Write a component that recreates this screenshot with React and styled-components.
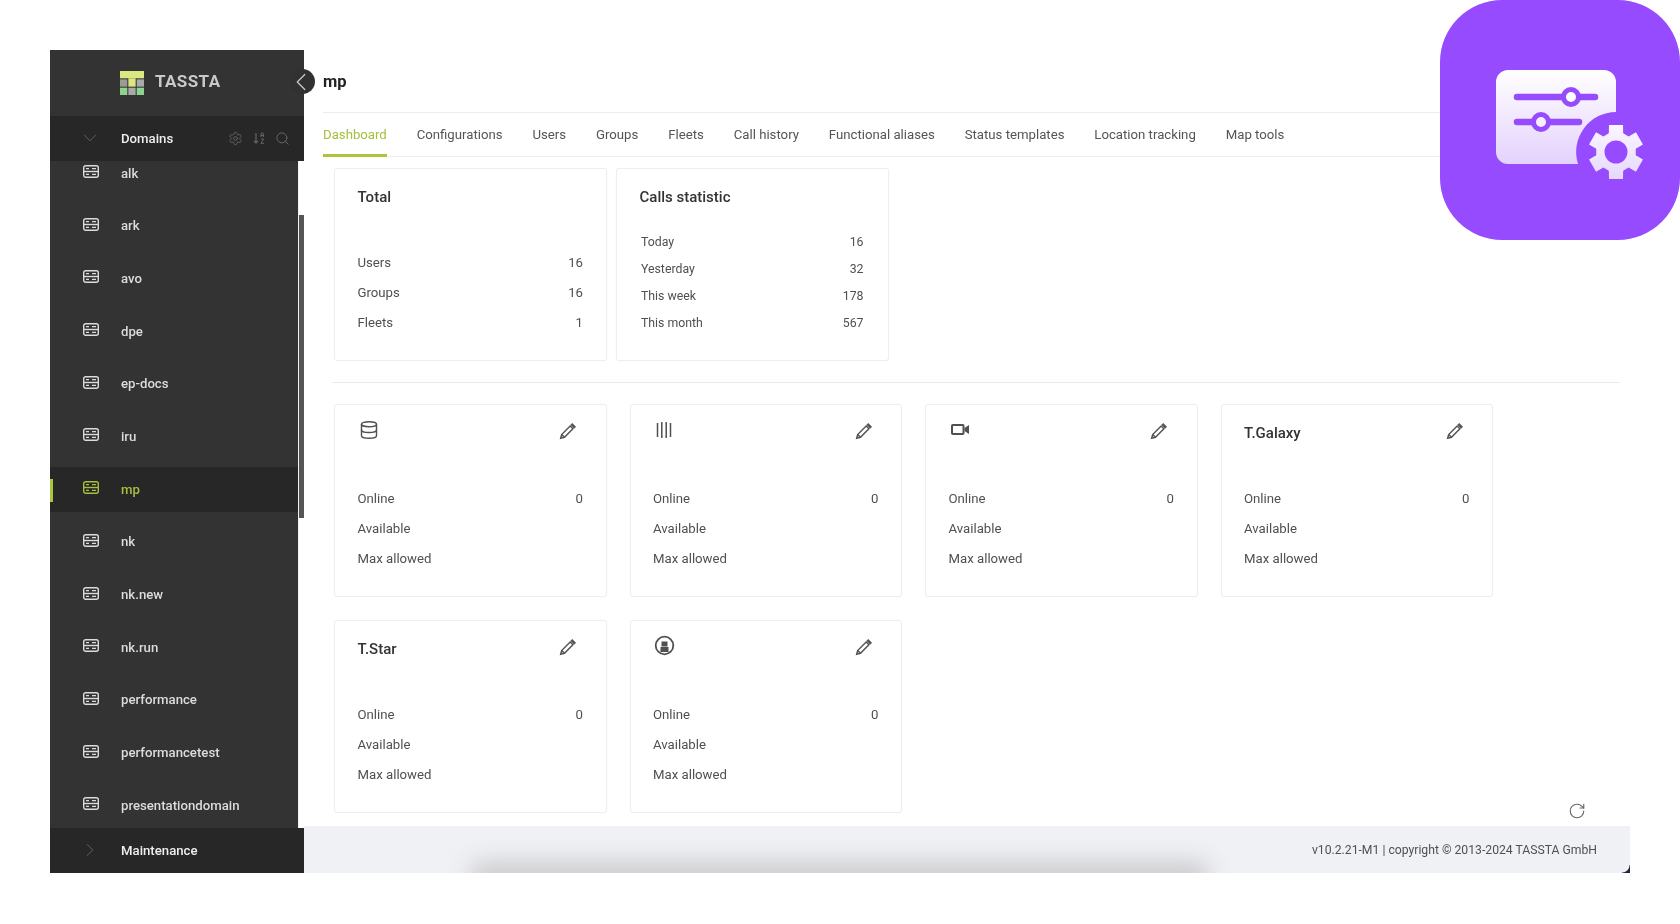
import React from 'react'
import styled, { createGlobalStyle } from 'styled-components'
import { ChevronDown, ChevronLeft, ChevronRight, Database, RotateCw, Search, Settings } from 'lucide-react'

const GlobalStyle = createGlobalStyle`
  html, body {
    margin: 0;
    background: #fff;
  }
  body {
    font-family: Roboto, "Liberation Sans", sans-serif;
    overflow: hidden;
  }
`

const Page = styled.div`
  position: relative;
  width: 1680px;
  height: 924px;
  padding: 50px 0 0 50px;
  box-sizing: border-box;
  overflow: hidden;
`
const Frame = styled.div`
  display: flex;
  width: 1580px;
  height: 823px;
  filter: blur(0.4px);
`
const Sidebar = styled.aside`
  position: relative;
  display: flex;
  flex-direction: column;
  flex: 0 0 254px;
  background: #343333;
  border-bottom-left-radius: 6px;
  overflow: visible;
`
const Brand = styled.div`
  display: flex;
  align-items: center;
  gap: 11px;
  height: 66px;
  padding-left: 70px;
  box-sizing: border-box;
`
const BrandName = styled.span`
  margin-top: -5px;
  font-size: 17px;
  font-weight: 700;
  letter-spacing: 0.4px;
  color: #c9c9c9;
`
const CollapseButton = styled.div`
  position: absolute;
  top: 19px;
  left: 240px;
  width: 25px;
  height: 25px;
  border-radius: 50%;
  background: #323131;
  color: #c8c8c8;
  display: flex;
  align-items: center;
  justify-content: center;
  > svg {
    flex: none;
    margin-left: -3px;
  }
`
const Section = styled.div`
  display: flex;
  align-items: center;
  flex: 0 0 45px;
  padding: 0 14px 1px 29px;
  box-sizing: border-box;
  background: #282727;
  color: #eee;
  font-size: 13.2px;
  font-weight: 500;
  > svg:first-child {
    color: #666;
    margin-right: 20px;
  }
`
const SectionName = styled.span`
  flex: 1;
`
const SectionTools = styled.div`
  display: flex;
  align-items: center;
  gap: 9px;
  color: #666;
`
const ListArea = styled.div`
  display: flex;
  flex: 1;
  min-height: 0;
`
const List = styled.div`
  flex: 1;
  overflow: hidden;
`
const ListInner = styled.div`
  margin-top: -10.5px;
`
const Row = styled.div`
  position: relative;
  display: flex;
  align-items: center;
  height: 45px;
  margin-bottom: 7.7px;
  padding-left: 33px;
  font-size: 13.2px;
  font-weight: 500;
  background: ${p => (p.$active ? '#282727' : 'transparent')};
  color: ${p => (p.$active ? '#a5c03c' : '#dcdcdc')};
  > svg {
    margin: -3px 22px 0 0;
  }
`
const ActiveMark = styled.span`
  position: absolute;
  left: 0;
  top: 12px;
  width: 3px;
  height: 23px;
  background: #a9c63c;
`
const ScrollTrack = styled.div`
  flex: 0 0 6px;
  background: #fff;
  border-left: 1px solid #f0f0f0;
  box-sizing: border-box;
`
const ScrollThumb = styled.div`
  margin-top: 54px;
  height: 303px;
  background: #555;
`
const Main = styled.main`
  flex: 1;
  display: flex;
  flex-direction: column;
  min-width: 0;
`
const Header = styled.header`
  margin: 0 10px 0 19px;
`
const Title = styled.h1`
  display: flex;
  align-items: center;
  height: 62px;
  margin: 0;
  font-size: 16.5px;
  font-weight: 700;
  color: #222;
  border-bottom: 1px solid #ececec;
`
const Tabs = styled.nav`
  display: flex;
  gap: 29.9px;
  height: 43px;
  border-bottom: 1px solid #efefef;
`
const Tab = styled.div`
  display: flex;
  align-items: center;
  height: 44px;
  box-sizing: border-box;
  padding-top: 1px;
  font-size: 13.2px;
  color: ${p => (p.$active ? '#a5c03c' : '#555')};
  border-bottom: 3px solid ${p => (p.$active ? '#a9c63c' : 'transparent')};
`
const Content = styled.div`
  flex: 1;
  padding: 11px 10px 0 30px;
  min-height: 0;
`
const CardRow = styled.div`
  display: flex;
  gap: ${p => p.$gap}px;
  margin-bottom: ${p => p.$last ? 0 : 23}px;
`
const Divider = styled.hr`
  border: 0;
  border-top: 1px solid #e9e9e9;
  margin: 21px 0 21px -2px;
`
const Card = styled.section`
  width: 272.5px;
  height: 193px;
  box-sizing: border-box;
  padding: 0 22.5px;
  background: #fff;
  border: 1px solid #eeeeee;
  border-radius: 3px;
  box-shadow: 0 0 2px rgba(0, 0, 0, 0.04);
`
const CardHead = styled.div`
  display: flex;
  justify-content: space-between;
  align-items: flex-start;
  height: ${p => (p.$compact ? 59 : 78)}px;
  padding-top: 18px;
  box-sizing: border-box;
`
const CardTitle = styled.h2`
  margin: 0;
  font-size: 15px;
  font-weight: 500;
  line-height: 20px;
  color: #333;
`
const IconBox = styled.div`
  display: flex;
  justify-content: center;
  align-items: center;
  width: 22px;
  height: 20px;
  margin-top: -3.5px;
  color: #505050;
`
const EditIcon = styled.svg`
  width: 17px;
  height: 17px;
  margin-right: 7px;
  color: #555;
`
const Stat = styled.div`
  display: flex;
  justify-content: space-between;
  align-items: center;
  height: ${p => (p.$compact ? 27.2 : 30)}px;
  margin: ${p => (p.$compact ? '0 1.5px 0 1.5px' : '0')};
  font-size: ${p => (p.$compact ? 12.3 : 13.2)}px;
  color: #505050;
`
const Refresh = styled.div`
  align-self: flex-end;
  margin: 0 0 -7px auto;
  padding-right: 34px;
  color: #666;
  display: flex;
`
const Footer = styled.footer`
  position: relative;
  flex: 0 0 47px;
  display: flex;
  align-items: center;
  justify-content: flex-end;
  padding-right: 33px;
  background: #f0f1f5;
  font-size: 12.2px;
  color: #505050;
  overflow: hidden;
`
const FooterShade = styled.div`
  position: absolute;
  left: 168px;
  bottom: -20px;
  width: 735px;
  height: 30px;
  background: #c8c8ca;
  filter: blur(12px);
`
const FooterCorner = styled.div`
  position: absolute;
  right: 0;
  bottom: 0;
  width: 8px;
  height: 8px;
  background: radial-gradient(circle at 0 0, transparent 7px, #1e2a3c 8px);
`
const Badge = styled.div`
  position: absolute;
  top: 0;
  right: 0;
  width: 240px;
  height: 240px;
  border-radius: 62px;
  background: #964bff;
`

const DOMAINS = ['alk', 'ark', 'avo', 'dpe', 'ep-docs', 'iru', 'mp', 'nk', 'nk.new', 'nk.run', 'performance', 'performancetest', 'presentationdomain']
const TABS = ['Dashboard', 'Configurations', 'Users', 'Groups', 'Fleets', 'Call history', 'Functional aliases', 'Status templates', 'Location tracking', 'Map tools']

function ServerIcon() {
  return (
    <svg width="16" height="13" viewBox="0 0 16 13" fill="none" stroke="currentColor" strokeWidth="1.4">
      <rect x="0.7" y="0.7" width="14.6" height="11.6" rx="2" />
      <path d="M1 6.5h14" />
      <path d="M3 3.6h3M3 9.4h3M9 3.6h4M9 9.4h4" strokeWidth="1.2" />
    </svg>
  )
}

function Logo() {
  return (
    <svg width="24" height="24" viewBox="0 0 23 23">
      <rect x="0" y="0" width="23" height="7" fill="#dbe77f" />
      <rect x="8" y="7" width="7" height="8" fill="#dbe77f" />
      <rect x="0" y="8" width="7" height="7" fill="#9b9b93" />
      <rect x="16" y="8" width="7" height="7" fill="#a9a9a9" />
      <rect x="0" y="16" width="7" height="7" fill="#8ed48f" />
      <rect x="8" y="16" width="7" height="7" fill="#a9a9a9" />
      <rect x="16" y="16" width="7" height="7" fill="#8ed48f" />
    </svg>
  )
}

function SortIcon() {
  return (
    <svg width="14" height="14" viewBox="0 0 14 14" fill="none" stroke="currentColor" strokeWidth="1.2">
      <path d="M4 2v10M2 10l2 2 2-2" />
      <path d="M9 6V3l1.2-1.5L11.4 3v3M9 4.5h2.4M9 8h2.6L9 12.4h2.8" strokeWidth="1" />
    </svg>
  )
}

function PencilIcon() {
  return (
    <EditIcon viewBox="0 0 16 16" fill="none" stroke="currentColor" strokeWidth="1.4">
      <path d="M1.6 14.4l.9-3.5 8-8 2.6 2.6-8 8z" />
      <path d="M2.5 10.9l2.6 2.6" />
      <path d="M11.7 1.6l.7-.6 2.6 2.6-.7.7z" fill="currentColor" />
    </EditIcon>
  )
}

function BarsIcon() {
  return (
    <svg width="16" height="18" viewBox="0 0 16 18" stroke="currentColor" strokeWidth="1.5">
      <path d="M1.5 2v14M5.8 1v16M10.2 1v16M14.5 2v14" />
    </svg>
  )
}

function VideoIcon() {
  return (
    <svg width="18" height="11" viewBox="0 0 18 11">
      <rect x="1" y="1" width="11.5" height="9" rx="0.8" fill="none" stroke="currentColor" strokeWidth="2" />
      <path d="M13.5 4l4.5-3v9l-4.5-3z" fill="currentColor" />
    </svg>
  )
}

function StarIcon() {
  return (
    <svg width="21" height="21" viewBox="0 0 21 21" fill="none" stroke="currentColor">
      <circle cx="10.5" cy="10.5" r="8.8" strokeWidth="1.8" />
      <rect x="7.5" y="6.5" width="6" height="5" fill="currentColor" stroke="none" />
      <rect x="6.5" y="12" width="8" height="5" fill="currentColor" stroke="none" />
    </svg>
  )
}

function gearPath(cx, cy, outer, base, hole) {
  const pts = []
  for (let i = 0; i < 6; i++) {
    const a = -90 + i * 60
    ;[[base, -21], [outer, -14.5], [outer, 14.5], [base, 21]].forEach(([r, d]) => {
      const t = ((a + d) * Math.PI) / 180
      pts.push(`${(cx + r * Math.cos(t)).toFixed(2)} ${(cy + r * Math.sin(t)).toFixed(2)}`)
    })
  }
  return `M${pts.join('L')}Z M${cx - hole} ${cy}a${hole} ${hole} 0 1 0 ${hole * 2} 0a${hole} ${hole} 0 1 0 ${-hole * 2} 0Z`
}

function BadgeArt() {
  return (
    <svg width="240" height="240" viewBox="0 0 240 240">
      <defs>
        <linearGradient id="panelFill" x1="0" y1="70" x2="0" y2="164" gradientUnits="userSpaceOnUse">
          <stop offset="0" stopColor="#ffffff" />
          <stop offset="1" stopColor="#e4d2fc" />
        </linearGradient>
        <linearGradient id="gearFill" x1="0" y1="124" x2="0" y2="180" gradientUnits="userSpaceOnUse">
          <stop offset="0" stopColor="#fbf8ff" />
          <stop offset="1" stopColor="#e6d6fc" />
        </linearGradient>
      </defs>
      <path d="M68 70h96a12 12 0 0 1 12 12v30a40 40 0 0 0-38 52H68a12 12 0 0 1-12-12V82a12 12 0 0 1 12-12z" fill="url(#panelFill)" />
      <g stroke="#964bff" strokeWidth="6.5" strokeLinecap="round" fill="none">
        <path d="M77 97h78M77 122h62" />
      </g>
      <circle cx="131" cy="97" r="7.5" fill="#fff" stroke="#964bff" strokeWidth="5" />
      <circle cx="101" cy="122" r="7.5" fill="#f6effe" stroke="#964bff" strokeWidth="5" />
      <path d={gearPath(176, 152, 28, 20, 11.5)} fill="url(#gearFill)" fillRule="evenodd" />
    </svg>
  )
}

function StatCard({ head, name, rows, compact, editable }) {
  return (
    <Card>
      <CardHead $compact={compact}>
        {name ? <CardTitle>{name}</CardTitle> : <IconBox>{head}</IconBox>}
        {editable && <PencilIcon />}
      </CardHead>
      {rows.map(([label, value]) => (
        <Stat key={label} $compact={compact}>
          <span>{label}</span>
          <span>{value}</span>
        </Stat>
      ))}
    </Card>
  )
}

const USAGE = [['Online', '0'], ['Available', ''], ['Max allowed', '']]

export default function App() {
  return (
    <Page>
      <GlobalStyle />
      <Frame>
        <Sidebar>
          <Brand>
            <Logo />
            <BrandName>TASSTA</BrandName>
          </Brand>
          <CollapseButton>
            <ChevronLeft size={30} strokeWidth={1} />
          </CollapseButton>
          <Section>
            <ChevronDown size={22} strokeWidth={1} />
            <SectionName>Domains</SectionName>
            <SectionTools>
              <Settings size={15} strokeWidth={1.4} />
              <SortIcon />
              <Search size={15} strokeWidth={1.6} />
            </SectionTools>
          </Section>
          <ListArea>
            <List>
              <ListInner>
                {DOMAINS.map(d => (
                  <Row key={d} $active={d === 'mp'}>
                    {d === 'mp' && <ActiveMark />}
                    <ServerIcon />
                    {d}
                  </Row>
                ))}
              </ListInner>
            </List>
            <ScrollTrack>
              <ScrollThumb />
            </ScrollTrack>
          </ListArea>
          <Section>
            <ChevronRight size={22} strokeWidth={1} />
            <SectionName>Maintenance</SectionName>
          </Section>
        </Sidebar>
        <Main>
          <Header>
            <Title>mp</Title>
            <Tabs>
              {TABS.map(t => (
                <Tab key={t} $active={t === 'Dashboard'}>{t}</Tab>
              ))}
            </Tabs>
          </Header>
          <Content>
            <CardRow $gap={9.5} $last>
              <StatCard name="Total" rows={[['Users', '16'], ['Groups', '16'], ['Fleets', '1']]} />
              <StatCard name="Calls statistic" compact rows={[['Today', '16'], ['Yesterday', '32'], ['This week', '178'], ['This month', '567']]} />
            </CardRow>
            <Divider />
            <CardRow $gap={23}>
              <StatCard editable head={<Database size={20} strokeWidth={1.7} />} rows={USAGE} />
              <StatCard editable head={<BarsIcon />} rows={USAGE} />
              <StatCard editable head={<VideoIcon />} rows={USAGE} />
              <StatCard editable name="T.Galaxy" rows={USAGE} />
            </CardRow>
            <CardRow $gap={23} $last>
              <StatCard editable name="T.Star" rows={USAGE} />
              <StatCard editable head={<StarIcon />} rows={USAGE} />
              <Refresh>
                <RotateCw size={18} strokeWidth={1.5} />
              </Refresh>
            </CardRow>
          </Content>
          <Footer>
            <FooterShade />
            v10.2.21-M1 | copyright © 2013-2024 TASSTA GmbH
            <FooterCorner />
          </Footer>
        </Main>
      </Frame>
      <Badge>
        <BadgeArt />
      </Badge>
    </Page>
  )
}
